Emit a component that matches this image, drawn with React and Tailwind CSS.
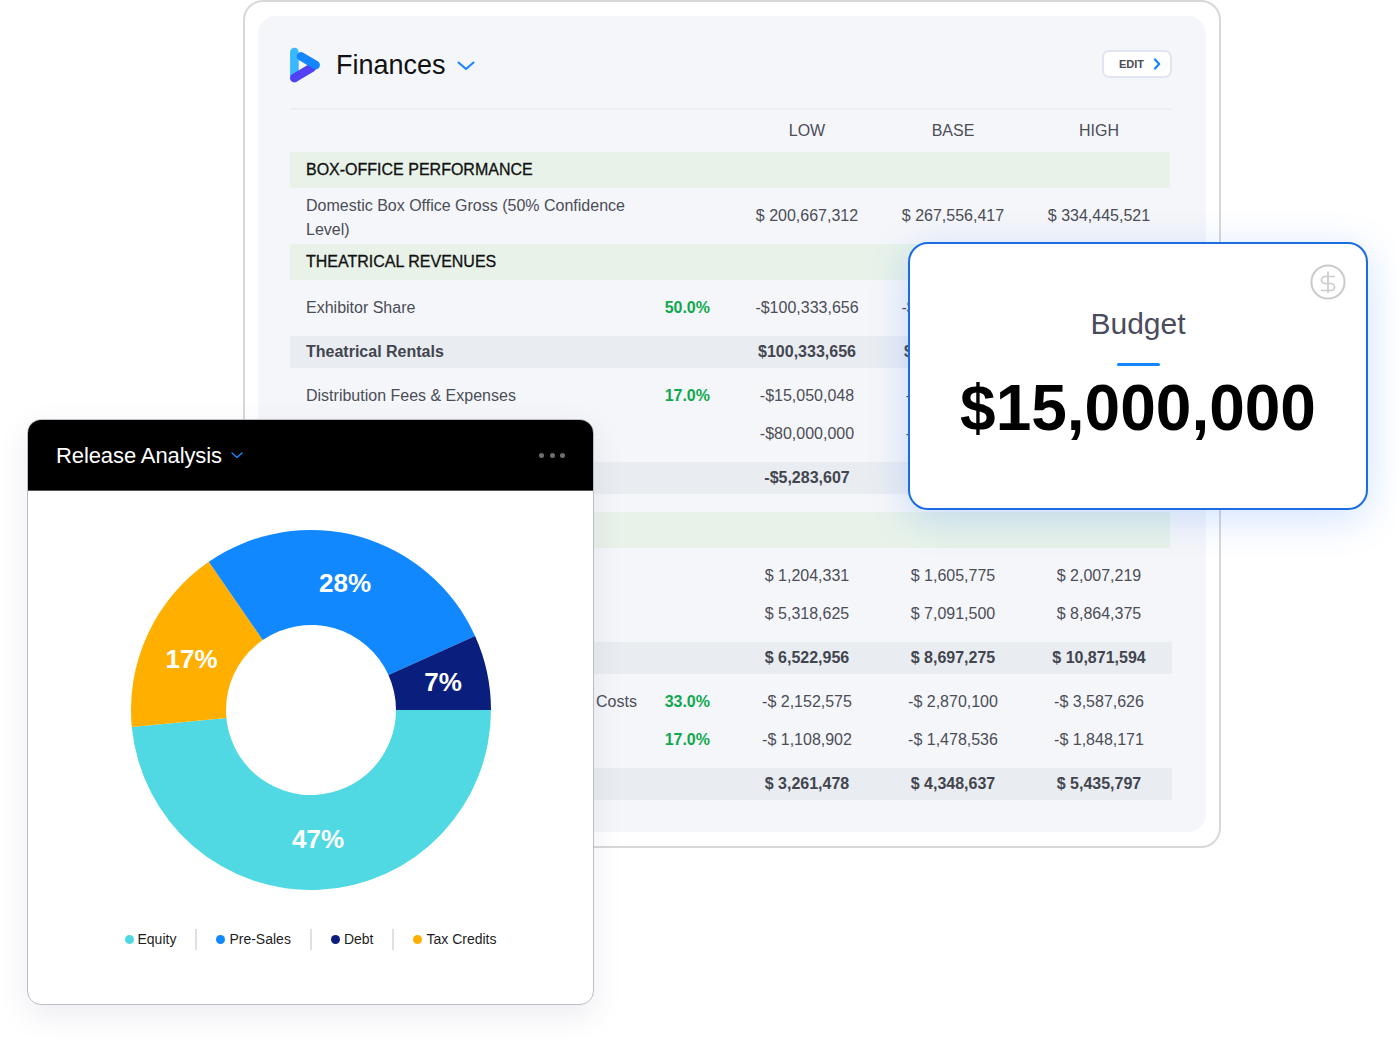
import React from "react";

const FONT = "font-['Liberation_Sans',Arial,sans-serif]";

function Row({ label, labelClass = "", pct, low, base, high }) {
  return (
    <div className="flex h-[38px] items-center text-[16px] text-[#4b4d57]">
      <div className={`flex-1 pl-4 ${labelClass}`}>{label}</div>
      <div className="w-[60px] text-right font-bold text-[#0fa84e]">{pct}</div>
      <div className="w-[24px]" />
      <div className="w-[146px] text-center">{low}</div>
      <div className="w-[146px] text-center">{base}</div>
      <div className="w-[146px] text-center">{high}</div>
    </div>
  );
}

function Total({ label, low, base, high }) {
  return (
    <div className="flex h-8 items-center bg-[#e9edf2] text-[16px] font-bold text-[#43454e]">
      <div className="flex-1 pl-4">{label}</div>
      <div className="w-[146px] text-center">{low}</div>
      <div className="w-[146px] text-center">{base}</div>
      <div className="w-[146px] text-center">{high}</div>
    </div>
  );
}

function Section({ children }) {
  return (
    <div className="mr-[2px] flex h-9 items-center bg-[#e8f2e9] pl-4 text-[16px] text-[#111111] [-webkit-text-stroke:0.3px_#111111]">
      {children}
    </div>
  );
}

function Logo() {
  return (
    <svg width="32" height="38" viewBox="289 46 32 38" fill="none" strokeWidth="8.6" strokeLinecap="round">
      <path d="M294.4 52 V78" stroke="#39b8ff" />
      <path d="M294.4 78 L312 67.5" stroke="#5140f4" />
      <path d="M301 56.4 L315.6 65" stroke="#1285ff" />
    </svg>
  );
}

function polar(r, deg) {
  const a = (deg * Math.PI) / 180;
  return [180 + r * Math.cos(a), 180 + r * Math.sin(a)];
}

function arc(start, end) {
  const R = 180;
  const r = 85;
  const [x1, y1] = polar(R, start);
  const [x2, y2] = polar(R, end);
  const [x3, y3] = polar(r, end);
  const [x4, y4] = polar(r, start);
  const large = end - start > 180 ? 1 : 0;
  return `M${x1} ${y1}A${R} ${R} 0 ${large} 1 ${x2} ${y2}L${x3} ${y3}A${r} ${r} 0 ${large} 0 ${x4} ${y4}Z`;
}

function Donut() {
  const labelClass = "fill-white text-[26px] font-bold";
  return (
    <svg width="360" height="360" viewBox="0 0 360 360">
      <path d={arc(0, 174.6)} fill="#50d9e2" />
      <path d={arc(174.6, 235.4)} fill="#ffaf00" />
      <path d={arc(235.4, 335.7)} fill="#1288ff" />
      <path d={arc(335.7, 360)} fill="#0a1e7d" />
      <text x="214" y="62" textAnchor="middle" className={labelClass}>28%</text>
      <text x="60.5" y="138" textAnchor="middle" className={labelClass}>17%</text>
      <text x="312" y="161" textAnchor="middle" className={labelClass}>7%</text>
      <text x="187" y="318" textAnchor="middle" className={labelClass}>47%</text>
    </svg>
  );
}

function LegendItem({ color, children }) {
  return (
    <div className="flex items-center gap-1">
      <span className={`h-[9px] w-[9px] rounded-full ${color}`} />
      <span>{children}</span>
    </div>
  );
}

function Sep() {
  return <span className="h-[21px] w-[2px] bg-[#e0e0e2]" />;
}

export default function App() {
  return (
    <div className={`relative h-[1044px] w-[1397px] overflow-hidden bg-white ${FONT}`}>
      {/* Finances sheet */}
      <div className="ml-[243px] h-[848px] w-[978px] rounded-[20px] border-2 border-[#d8d8d8] bg-white px-[13px] py-[14px]">
        <div className="h-[816px] rounded-[18px] bg-[#f5f6f9] pl-8 pr-[34px] pt-8">
          <div className="flex h-[60px] items-start justify-between border-b-2 border-[#eceef5] box-content">
            <div className="flex h-[34px] items-center">
              <div className="-ml-px -mt-px w-[47px]"><Logo /></div>
              <span className="text-[27px] text-[#111111]">Finances</span>
              <svg className="ml-[11px] mt-[1px]" width="18" height="10" viewBox="0 0 18 10" fill="none" stroke="#1285ff" strokeWidth="2" strokeLinecap="round" strokeLinejoin="round">
                <path d="M1.5 1.5 L9 8 L16.5 1.5" />
              </svg>
            </div>
            <div className="mt-[2px] flex h-[28px] w-[70px] items-center justify-between rounded-[7px] border-2 border-[#e1e4f2] bg-white pl-[15px] pr-[9px] text-[11px] font-bold text-[#4b4d57]">
              <span>EDIT</span>
              <svg width="8" height="12" viewBox="0 0 8 12" fill="none" stroke="#1285ff" strokeWidth="2.2" strokeLinecap="round" strokeLinejoin="round">
                <path d="M2 1.5 L6.2 6 L2 10.5" />
              </svg>
            </div>
          </div>

          <div className="flex h-[42px] items-center text-[16px] text-[#4b4d57]">
            <div className="flex-1" />
            <div className="w-[146px] text-center">LOW</div>
            <div className="w-[146px] text-center">BASE</div>
            <div className="w-[146px] text-center">HIGH</div>
          </div>

          <Section>BOX-OFFICE PERFORMANCE</Section>
          <div className="py-[9px]">
            <Row label="Domestic Box Office Gross (50% Confidence Level)" labelClass="pt-1" low="$ 200,667,312" base="$ 267,556,417" high="$ 334,445,521" />
          </div>

          <Section>THEATRICAL REVENUES</Section>
          <div className="py-[9px]">
            <Row label="Exhibitor Share" pct="50.0%" low="-$100,333,656" base="-$133,778,208" />
          </div>
          <Total label="Theatrical Rentals" low="$100,333,656" base="$133,778,209" />
          <div className="py-[9px]">
            <Row label="Distribution Fees & Expenses" pct="17.0%" low="-$15,050,048" base="-$20,066,731" />
            <Row low="-$80,000,000" base="-$80,000,000" />
          </div>
          <Total low="-$5,283,607" />

          <div className="h-[18px]" />
          <Section />
          <div className="py-[9px]">
            <Row low="$ 1,204,331" base="$ 1,605,775" high="$ 2,007,219" />
            <Row low="$ 5,318,625" base="$ 7,091,500" high="$ 8,864,375" />
          </div>
          <Total low="$ 6,522,956" base="$ 8,697,275" high="$ 10,871,594" />
          <div className="py-[9px]">
            <Row label="Costs" labelClass="pl-[306px]" pct="33.0%" low="-$ 2,152,575" base="-$ 2,870,100" high="-$ 3,587,626" />
            <Row pct="17.0%" low="-$ 1,108,902" base="-$ 1,478,536" high="-$ 1,848,171" />
          </div>
          <Total low="$ 3,261,478" base="$ 4,348,637" high="$ 5,435,797" />
        </div>
      </div>

      {/* Release Analysis card */}
      <div className="absolute left-[27px] top-[419px] flex h-[586px] w-[567px] flex-col overflow-hidden rounded-[14px] border border-[#bdbdc6] bg-white shadow-[0_10px_30px_rgba(70,70,130,0.1)]">
        <div className="flex h-[71px] shrink-0 items-center justify-between border-b border-[#55555a] bg-black pl-[28px] pr-[28px]">
          <div className="flex items-center">
            <span className="text-[22px] tracking-[-0.1px] text-white">Release Analysis</span>
            <svg className="ml-[9px] mt-[1px]" width="12" height="7" viewBox="0 0 12 7" fill="none" stroke="#1285ff" strokeWidth="1.4" strokeLinecap="round" strokeLinejoin="round">
              <path d="M1 1 L6 5.5 L11 1" />
            </svg>
          </div>
          <div className="flex gap-[5.5px]">
            <span className="h-[5px] w-[5px] rounded-full bg-[#6e6e6e]" />
            <span className="h-[5px] w-[5px] rounded-full bg-[#6e6e6e]" />
            <span className="h-[5px] w-[5px] rounded-full bg-[#6e6e6e]" />
          </div>
        </div>
        <div className="flex justify-center pt-[39px]">
          <Donut />
        </div>
        <div className="mt-[39px] flex items-center justify-center gap-[19px] text-[14px] text-[#1d1d22]">
          <LegendItem color="bg-[#50d9e2]">Equity</LegendItem>
          <Sep />
          <LegendItem color="bg-[#1288ff]">Pre-Sales</LegendItem>
          <Sep />
          <LegendItem color="bg-[#0a1e7d]">Debt</LegendItem>
          <Sep />
          <LegendItem color="bg-[#ffaf00]">Tax Credits</LegendItem>
        </div>
      </div>

      {/* Budget card */}
      <div className="absolute left-[908px] top-[242px] flex h-[268px] w-[460px] flex-col items-center rounded-[20px] border-2 border-[#1a6ce2] bg-white pt-[62px] shadow-[0_8px_40px_rgba(20,110,255,0.2)]">
        <svg className="absolute right-[20px] top-[20px]" width="36" height="36" viewBox="0 0 36 36" fill="none" stroke="#cbcbcb" strokeWidth="2">
          <circle cx="18" cy="18" r="16.6" />
          <path d="M25 12.5 H15 a3.5 3.5 0 0 0 0 7 h6 a3.5 3.5 0 0 1 0 7 H11 M18 7.5 V29" strokeWidth="1.7" />
        </svg>
        <div className="text-[30px] leading-[36px] text-[#4a4c5c]">Budget</div>
        <div className="mt-[21px] h-[3px] w-[43px] rounded-full bg-[#1285ff]" />
        <div className="mt-[5px] text-[64px] font-bold leading-[74px] text-black">$15,000,000</div>
      </div>
    </div>
  );
}
